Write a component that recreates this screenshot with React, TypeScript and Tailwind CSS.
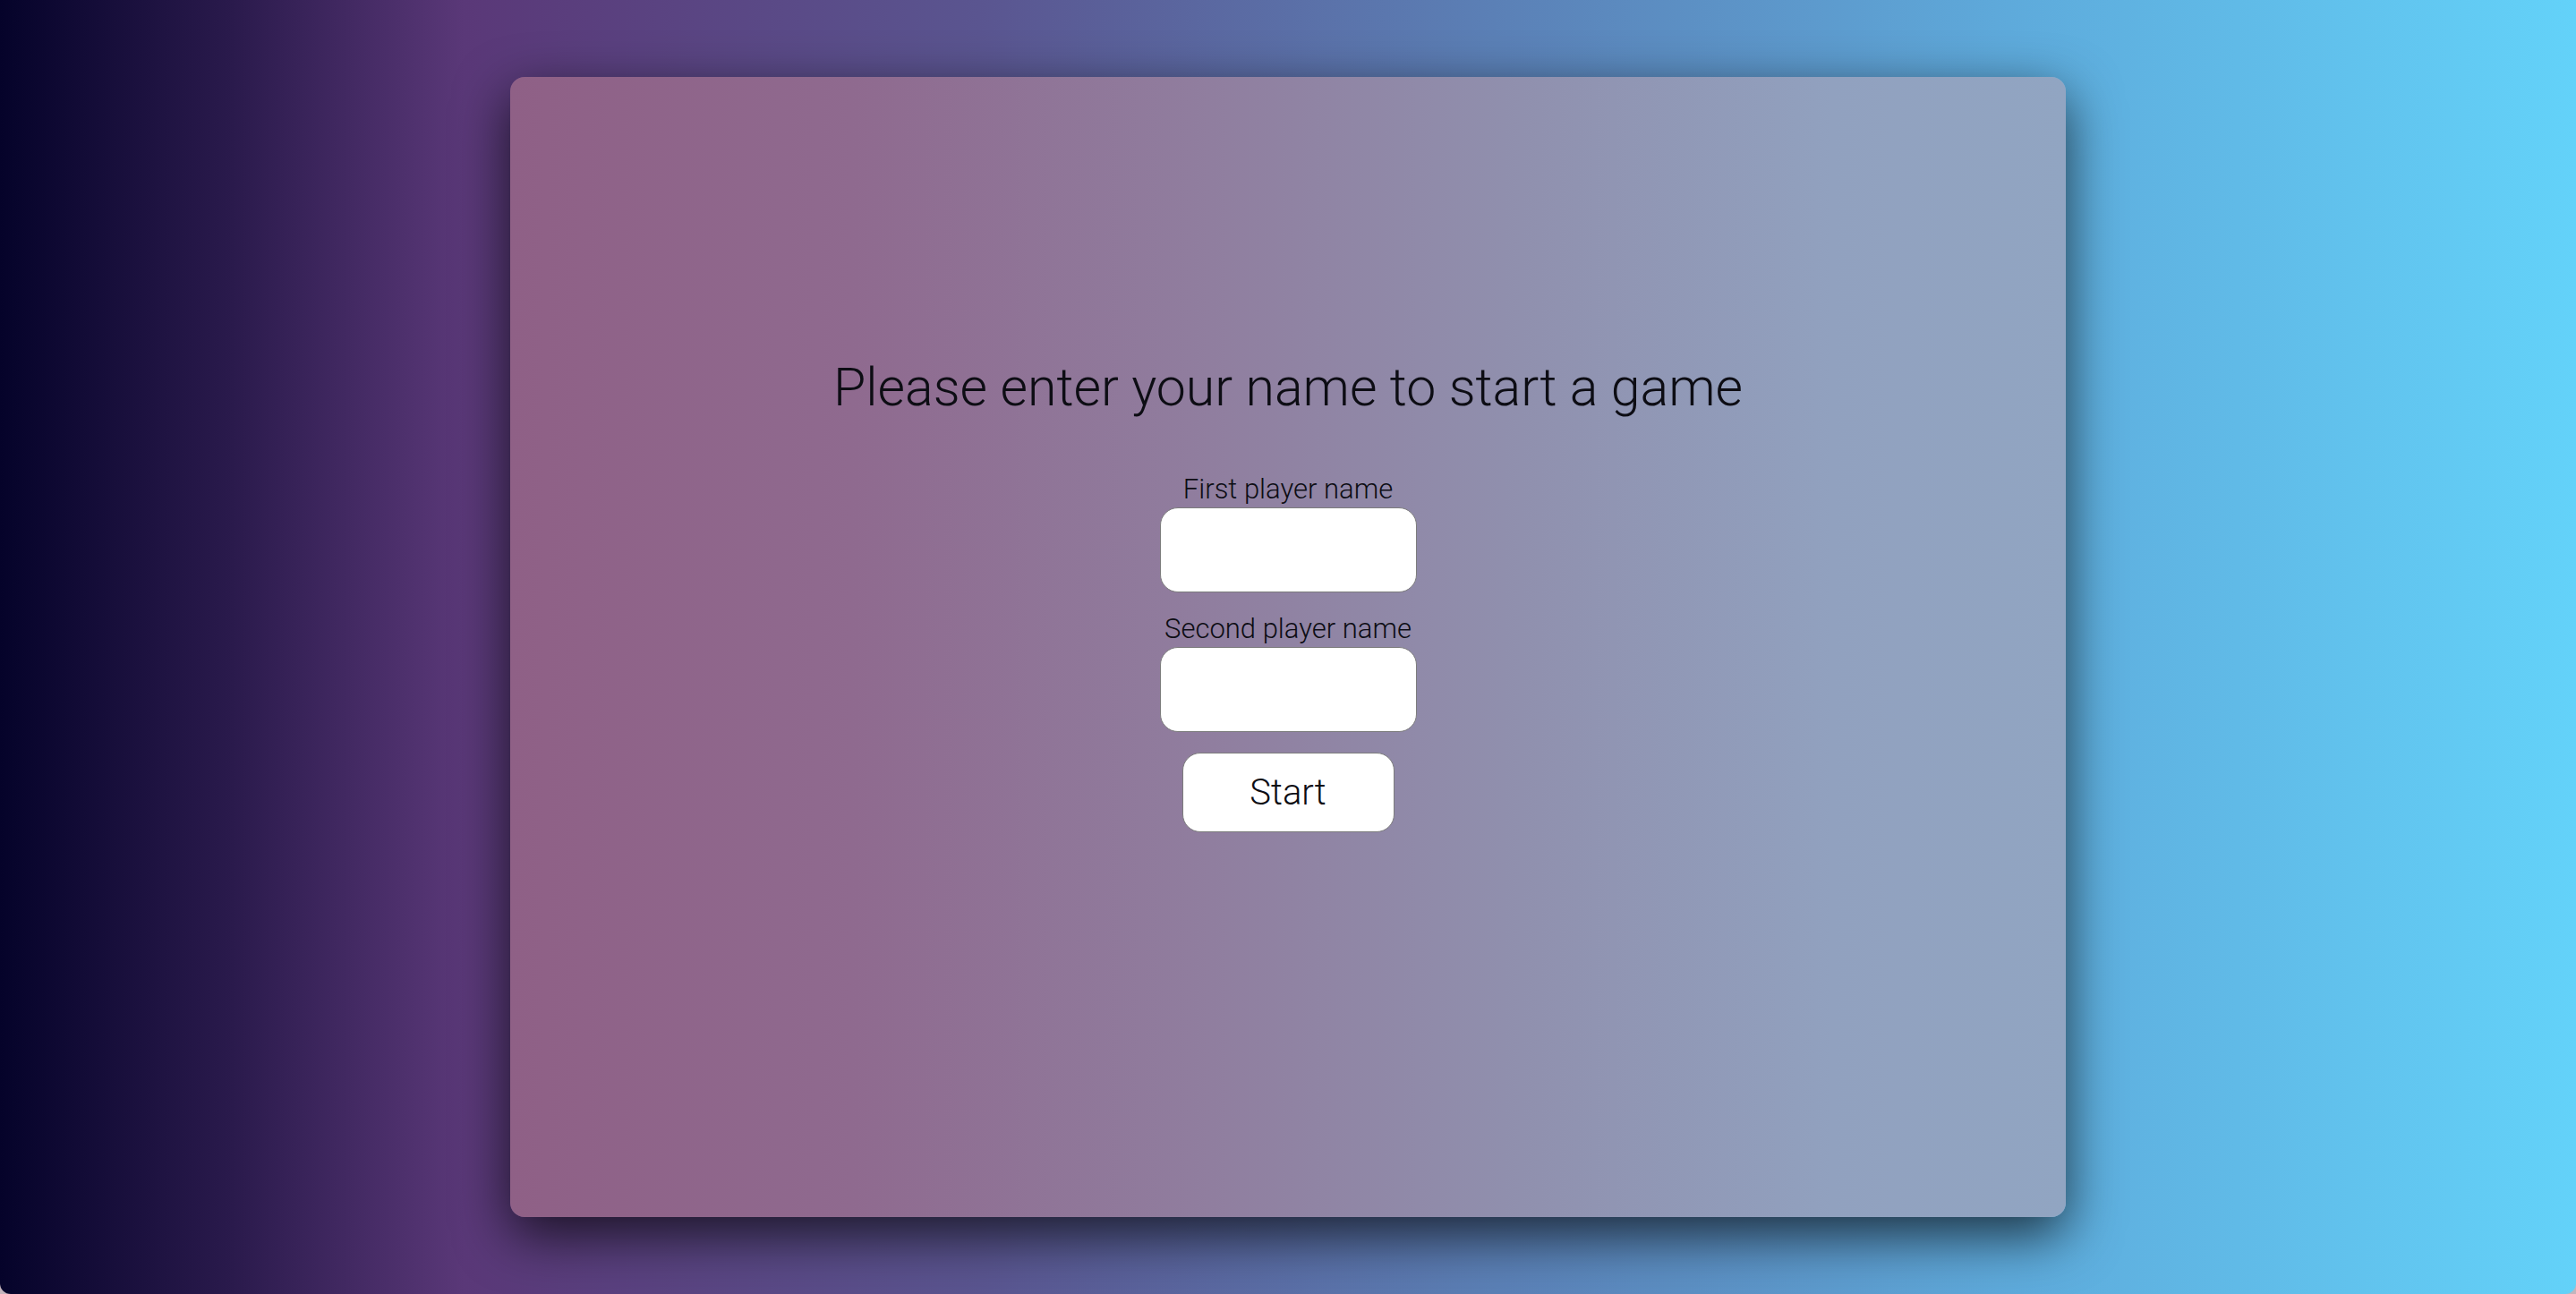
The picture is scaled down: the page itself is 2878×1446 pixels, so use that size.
import { useState } from 'react';

export default function App() {
  const [first, setFirst] = useState('');
  const [second, setSecond] = useState('');

  return (
    <div className="h-[1446px] w-full bg-[#c4b4bc]">
      <div
        className="flex h-full w-full items-center justify-center rounded-b-[12px] bg-[linear-gradient(to_right,#05032a_0%,#2a1a4c_9%,#5a3878_18%,#5a5590_38%,#5b80b6_58%,#5eaadb_78%,#63d2f9_100%)]"
        style={{ fontFamily: 'Roboto, "Liberation Sans", sans-serif' }}
      >
        <div className="flex h-[1274px] w-[1738px] flex-col items-center rounded-[16px] bg-[linear-gradient(to_right,#8f6086_0%,#8f6a8f_22%,#907e9f_45%,#9090ae_65%,#91a1bf_85%,#91a5c2_100%)] pt-[313px] shadow-[0_20px_60px_rgba(0,0,0,0.7)]">
          <h1 className="text-[59px] font-light leading-[68px] text-[#0d0d14]">
            Please enter your name to start a game
          </h1>

          <form
            className="mt-[62px] flex flex-col items-center"
            onSubmit={(e) => e.preventDefault()}
          >
            <label htmlFor="first" className="text-[31px] font-light leading-[35px] text-[#0d0d14]">
              First player name
            </label>
            <input
              id="first"
              value={first}
              onChange={(e) => setFirst(e.target.value)}
              className="mt-[3px] h-[95px] w-[287px] rounded-[20px] border border-[#7c7c7c] bg-white px-4 text-[30px] outline-none"
            />

            <label htmlFor="second" className="mt-[23px] text-[31px] font-light leading-[35px] text-[#0d0d14]">
              Second player name
            </label>
            <input
              id="second"
              value={second}
              onChange={(e) => setSecond(e.target.value)}
              className="mt-[3px] h-[95px] w-[287px] rounded-[20px] border border-[#7c7c7c] bg-white px-4 text-[30px] outline-none"
            />

            <button
              type="submit"
              className="mt-[23px] h-[89px] w-[237px] rounded-[20px] border border-[#7c7c7c] bg-white text-[40px] font-light text-[#0d0d14]"
            >
              Start
            </button>
          </form>
        </div>
      </div>
    </div>
  );
}
